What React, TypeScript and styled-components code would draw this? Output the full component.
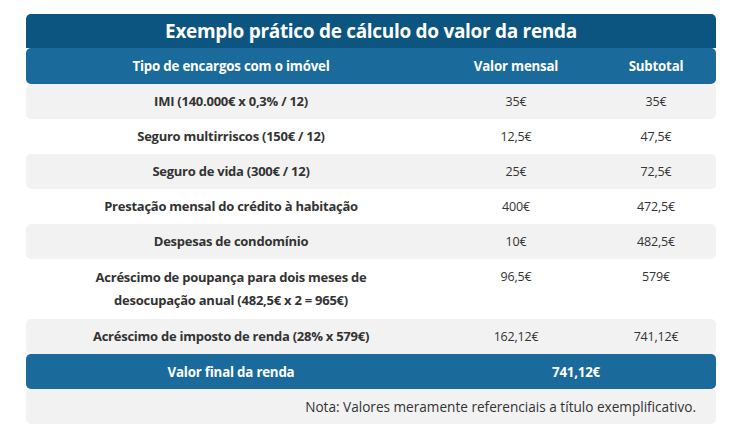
import styled, { createGlobalStyle } from "styled-components";

const GlobalStyle = createGlobalStyle`
  body {
    margin: 0;
    background: #ffffff;
    font-family: "Open Sans", "Noto Sans", sans-serif;
    color: #333333;
  }
`;

const Page = styled.div`
  padding: 14px 19px 0 26px;
  width: 690px;
`;

const Title = styled.div`
  background-color: #0c5581;
  color: #ffffff;
  border-radius: 5px 5px 0 0;
  height: 34px;
  display: flex;
  align-items: center;
  justify-content: center;
  font-size: 19px;
  font-weight: 700;
  letter-spacing: -0.3px;
`;

const Row = styled.div<{ $bg: string; $height?: number }>`
  display: grid;
  grid-template-columns: 410px 160px 120px;
  background-color: ${(p) => p.$bg};
  border-radius: 5px;
  min-height: ${(p) => p.$height ?? 35}px;
  align-items: center;
`;

const HeadCell = styled.div`
  color: #ffffff;
  font-weight: 700;
  font-size: 13.3px;
  text-align: center;
  letter-spacing: -0.2px;
`;

const Label = styled.div`
  font-weight: 700;
  font-size: 13px;
  line-height: 23px;
  text-align: center;
  color: #333333;
  letter-spacing: -0.25px;
`;

const Value = styled.div<{ $top?: boolean }>`
  font-size: 12.5px;
  text-align: center;
  color: #333333;
  align-self: ${(p) => (p.$top ? "start" : "center")};
  padding-top: ${(p) => (p.$top ? 6 : 0)}px;
  line-height: 23px;
  letter-spacing: -0.2px;
`;

const TotalLabel = styled.div`
  color: #ffffff;
  font-weight: 700;
  font-size: 13.3px;
  text-align: center;
  letter-spacing: -0.2px;
`;

const TotalValue = styled(TotalLabel)`
  grid-column: span 2;
`;

const Note = styled.div`
  background-color: #f2f2f2;
  border-radius: 5px;
  height: 35px;
  display: flex;
  align-items: center;
  justify-content: flex-end;
  padding-right: 20px;
  font-size: 13.6px;
  color: #333333;
`;

const rows = [
  { label: "IMI (140.000€ x 0,3% / 12)", monthly: "35€", subtotal: "35€" },
  { label: "Seguro multirriscos (150€ / 12)", monthly: "12,5€", subtotal: "47,5€" },
  { label: "Seguro de vida (300€ / 12)", monthly: "25€", subtotal: "72,5€" },
  { label: "Prestação mensal do crédito à habitação", monthly: "400€", subtotal: "472,5€" },
  { label: "Despesas de condomínio", monthly: "10€", subtotal: "482,5€" },
];

function App() {
  return (
    <>
      <GlobalStyle />
      <Page>
        <Title>Exemplo prático de cálculo do valor da renda</Title>
        <Row $bg="#1a6b9b" $height={36}>
          <HeadCell>Tipo de encargos com o imóvel</HeadCell>
          <HeadCell>Valor mensal</HeadCell>
          <HeadCell>Subtotal</HeadCell>
        </Row>
        {rows.map((r, i) => (
          <Row key={r.label} $bg={i % 2 === 0 ? "#f2f2f2" : "#ffffff"}>
            <Label>{r.label}</Label>
            <Value>{r.monthly}</Value>
            <Value>{r.subtotal}</Value>
          </Row>
        ))}
        <Row $bg="#ffffff" $height={60}>
          <Label>
            Acréscimo de poupança para dois meses de
            <br />
            desocupação anual (482,5€ x 2 = 965€)
          </Label>
          <Value $top>96,5€</Value>
          <Value $top>579€</Value>
        </Row>
        <Row $bg="#f2f2f2">
          <Label>Acréscimo de imposto de renda (28% x 579€)</Label>
          <Value>162,12€</Value>
          <Value>741,12€</Value>
        </Row>
        <Row $bg="#1a6b9b">
          <TotalLabel>Valor final da renda</TotalLabel>
          <TotalValue>741,12€</TotalValue>
        </Row>
        <Note>Nota: Valores meramente referenciais a título exemplificativo.</Note>
      </Page>
    </>
  );
}

export default App;
